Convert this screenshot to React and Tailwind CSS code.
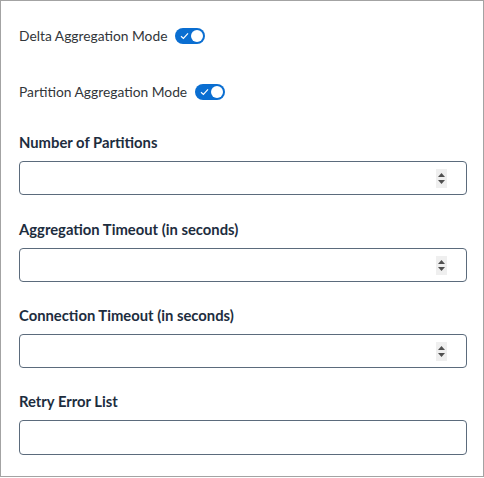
import React from "react";

function Toggle() {
  return (
    <div className="relative w-[30px] h-[16px] rounded-full bg-[#0a6ed1] shrink-0">
      <svg className="absolute left-[5px] top-[4px]" width="9" height="8" viewBox="0 0 9 8">
        <path d="M1 4.2 L3.4 6.4 L8 1.4" fill="none" stroke="#ffffff" strokeWidth="1.2" />
      </svg>
      <div className="absolute right-[2px] top-[2px] w-[12px] h-[12px] rounded-full bg-white" />
    </div>
  );
}

function Spinner() {
  return (
    <div className="w-[11px] h-[19px] bg-[#efefef] flex flex-col items-center justify-center gap-[3px]">
      <svg width="7" height="4" viewBox="0 0 7 4"><path d="M3.5 0 L7 4 L0 4 Z" fill="#505050" /></svg>
      <svg width="7" height="4" viewBox="0 0 7 4"><path d="M0 0 L7 0 L3.5 4 Z" fill="#505050" /></svg>
    </div>
  );
}

function NumberInput({ className = "" }) {
  return (
    <div className={"h-[34px] w-[448px] rounded-[4px] border border-[#5b6b7c] bg-white flex items-center justify-end pr-[19px] " + className}>
      <Spinner />
    </div>
  );
}

export default function App() {
  return (
    <div
      className="w-[484px] h-[477px] border border-[#a3a3a3] bg-white text-[13.8px] text-[#32363a] px-[18px] pt-[25px]"
      style={{ fontFamily: "Lato, 'Open Sans', sans-serif" }}
    >
      <div className="h-5 flex items-center gap-2">
        <span>Delta Aggregation Mode</span>
        <Toggle />
      </div>
      <div className="h-5 mt-[36px] flex items-center gap-2">
        <span>Partition Aggregation Mode</span>
        <Toggle />
      </div>
      <div className="h-5 mt-[30px] flex items-center font-bold text-[14.8px] text-[#1d2d3e]">Number of Partitions</div>
      <NumberInput className="mt-[9px]" />
      <div className="h-5 mt-[24px] flex items-center font-bold text-[14.8px] text-[#1d2d3e]">Aggregation Timeout (in seconds)</div>
      <NumberInput className="mt-[9px]" />
      <div className="h-5 mt-[23px] flex items-center font-bold text-[14.8px] text-[#1d2d3e]">Connection Timeout (in seconds)</div>
      <NumberInput className="mt-[9px]" />
      <div className="h-5 mt-[23px] flex items-center font-bold text-[14.8px] text-[#1d2d3e]">Retry Error List</div>
      <div className="mt-[9px] h-[35px] w-[448px] rounded-[4px] border border-[#5b6b7c] bg-white" />
    </div>
  );
}
